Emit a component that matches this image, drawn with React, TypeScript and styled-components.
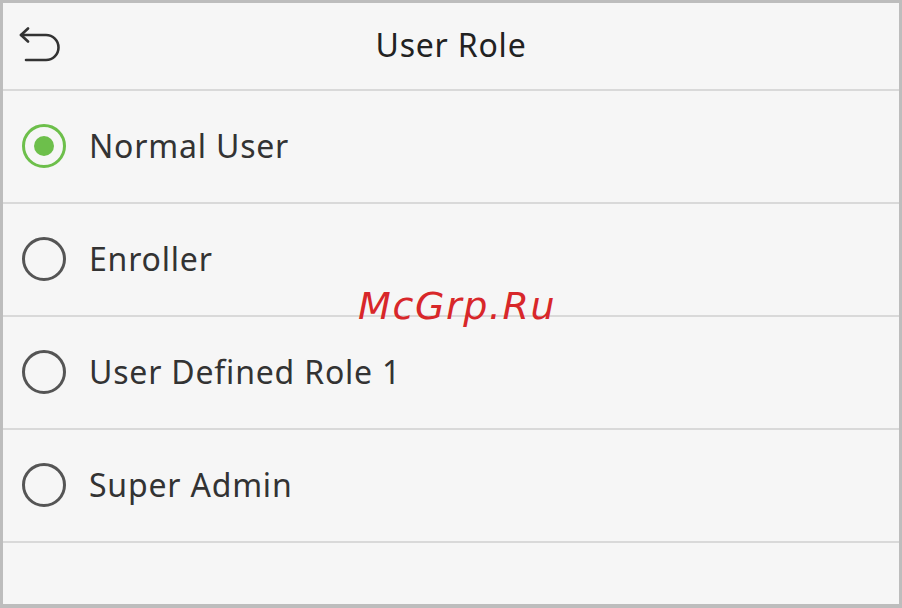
import styled, { createGlobalStyle } from "styled-components";

const GlobalStyle = createGlobalStyle`
  html, body {
    margin: 0;
    padding: 0;
    background: #bdbdbd;
  }
`;

const Frame = styled.div`
  width: 902px;
  height: 608px;
  box-sizing: border-box;
  border-style: solid;
  border-color: #bdbdbd;
  border-width: 3px 3px 4px 3px;
  background: #f6f6f6;
  font-family: "Noto Sans", "Open Sans", sans-serif;
  color: #333333;
  position: relative;
  overflow: hidden;
`;

const Header = styled.div`
  height: 86px;
  display: grid;
  grid-template-columns: 90px 1fr 90px;
  align-items: center;
  border-bottom: 2px solid #d9d9d9;
`;

const BackButton = styled.div`
  display: flex;
  align-items: center;
  padding-left: 15px;
  padding-top: 2px;
`;

const Title = styled.div`
  text-align: center;
  font-size: 32px;
  letter-spacing: 0.8px;
  color: #222222;
  padding-bottom: 4px;
`;

const List = styled.div`
  display: flex;
  flex-direction: column;
`;

const Row = styled.div`
  height: 113px;
  box-sizing: border-box;
  display: flex;
  align-items: center;
  gap: 23px;
  padding-left: 19px;
  padding-bottom: 2px;
  border-bottom: 2px solid #d9d9d9;
`;

const Radio = styled.span<{ checked: boolean }>`
  width: 44px;
  height: 44px;
  box-sizing: border-box;
  border-radius: 50%;
  border: 3px solid ${(p) => (p.checked ? "#6dbf4b" : "#555555")};
  display: flex;
  align-items: center;
  justify-content: center;
  &::after {
    content: "";
    display: ${(p) => (p.checked ? "block" : "none")};
    width: 20px;
    height: 20px;
    border-radius: 50%;
    background: #6dbf4b;
  }
`;

const Label = styled.span`
  font-size: 32px;
  letter-spacing: 0.8px;
  color: #333333;
`;

const Watermark = styled.div`
  position: absolute;
  left: 355px;
  top: 281px;
  font-family: "DejaVu Sans", sans-serif;
  font-style: italic;
  font-size: 38px;
  color: #d8272a;
  letter-spacing: 1.6px;
`;

const roles = ["Normal User", "Enroller", "User Defined Role 1", "Super Admin"];

function BackIcon() {
  return (
    <svg width="44" height="40" viewBox="0 0 44 40" fill="none">
      <path
        d="M3 8 H28 A12.5 12.5 0 0 1 28 33 H8"
        stroke="#333"
        strokeWidth="2.6"
        strokeLinecap="round"
      />
      <path
        d="M10 1.5 L3 8 L10 14.5"
        stroke="#333"
        strokeWidth="2.6"
        strokeLinecap="round"
        strokeLinejoin="round"
      />
    </svg>
  );
}

function App() {
  const selected = 0;
  return (
    <>
      <GlobalStyle />
      <Frame>
        <Header>
          <BackButton>
            <BackIcon />
          </BackButton>
          <Title>User Role</Title>
          <div />
        </Header>
        <List>
          {roles.map((role, i) => (
            <Row key={role}>
              <Radio checked={i === selected} />
              <Label>{role}</Label>
            </Row>
          ))}
        </List>
        <Watermark>McGrp.Ru</Watermark>
      </Frame>
    </>
  );
}

export default App;
